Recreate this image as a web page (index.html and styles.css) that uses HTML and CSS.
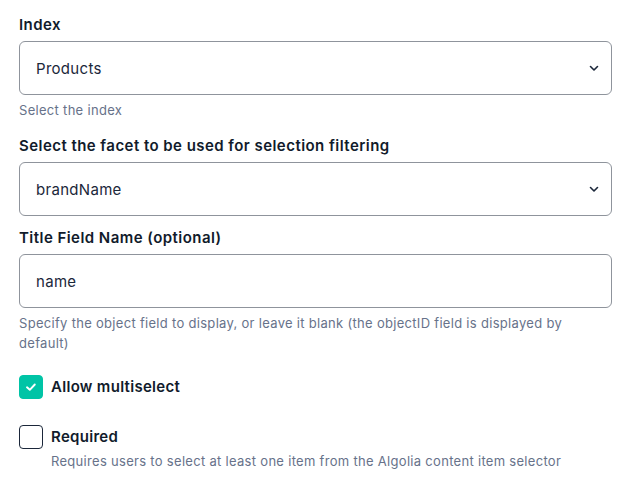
FILE: index.html
```html
<!DOCTYPE html>
<html>
<head>
<meta charset="utf-8">
<link rel="stylesheet" href="styles.css">
</head>
<body>
<form class="form">
  <div class="field">
    <label class="label">Index</label>
    <div class="select">
      <span class="value">Products</span>
      <svg class="chev" width="12" height="12" viewBox="0 0 12 12"><path d="M2.5 4.5 L6 8 L9.5 4.5" fill="none" stroke="#1b273a" stroke-width="1.6" stroke-linecap="round" stroke-linejoin="round"/></svg>
    </div>
    <div class="help">Select the index</div>
  </div>
  <div class="field">
    <label class="label">Select the facet to be used for selection filtering</label>
    <div class="select">
      <span class="value">brandName</span>
      <svg class="chev" width="12" height="12" viewBox="0 0 12 12"><path d="M2.5 4.5 L6 8 L9.5 4.5" fill="none" stroke="#1b273a" stroke-width="1.6" stroke-linecap="round" stroke-linejoin="round"/></svg>
    </div>
  </div>
  <div class="field">
    <label class="label">Title Field Name (optional)</label>
    <div class="select">
      <span class="value">name</span>
    </div>
    <div class="help">Specify the object field to display, or leave it blank (the objectID field is displayed by default)</div>
  </div>
  <div class="checks">
    <div class="check-row">
      <span class="box checked"><svg width="14" height="14" viewBox="0 0 14 14"><path d="M3 7.3 L5.8 9.8 L10.8 4.5" fill="none" stroke="#fff" stroke-width="1.9" stroke-linecap="round" stroke-linejoin="round"/></svg></span>
      <div class="check-text">
        <div class="check-label">Allow multiselect</div>
      </div>
    </div>
    <div class="check-row">
      <span class="box"></span>
      <div class="check-text">
        <div class="check-label">Required</div>
        <div class="help">Requires users to select at least one item from the Algolia content item selector</div>
      </div>
    </div>
  </div>
</form>
</body>
</html>
```
FILE: styles.css
```css
* { box-sizing: border-box; }
body {
  margin: 0;
  padding: 15px 28px 0 19px;
  background: #fff;
  font-family: Inter, "Noto Sans", sans-serif;
  color: #1b273a;
}
.form { display: flex; flex-direction: column; }
.field { display: flex; flex-direction: column; margin-bottom: 12px; }
.field:first-child { margin-bottom: 16px; }
.label {
  font-size: 15px;
  font-weight: 600;
  letter-spacing: 0.45px;
  line-height: 20px;
  margin-bottom: 6px;
  color: #111b2b;
}
.select {
  height: 54px;
  border: 1px solid #8f949c;
  border-radius: 6px;
  display: flex;
  align-items: center;
  justify-content: space-between;
  padding: 0 11px 0 16px;
}
.value { font-size: 15px; letter-spacing: 0.3px; color: #1b273a; }
.chev { display: block; }
.help {
  font-size: 13px;
  letter-spacing: 0.3px;
  color: #67728a;
  line-height: 20px;
  margin-top: 5px;
  padding-right: 30px;
}
.checks { display: flex; flex-direction: column; gap: 26px; margin-top: 10px; }
.check-row { display: flex; gap: 8px; align-items: flex-start; }
.box {
  width: 24px; height: 24px;
  border: 1px solid #1b273a;
  border-radius: 4px;
  display: flex; align-items: center; justify-content: center;
  flex: none;
}
.box.checked { background: #00c4a6; border-color: #00c4a6; }
.check-label { font-size: 15px; font-weight: 600; letter-spacing: 0.3px; line-height: 24px; color: #111b2b; }
.check-text .help { margin-top: 2px; }
```
